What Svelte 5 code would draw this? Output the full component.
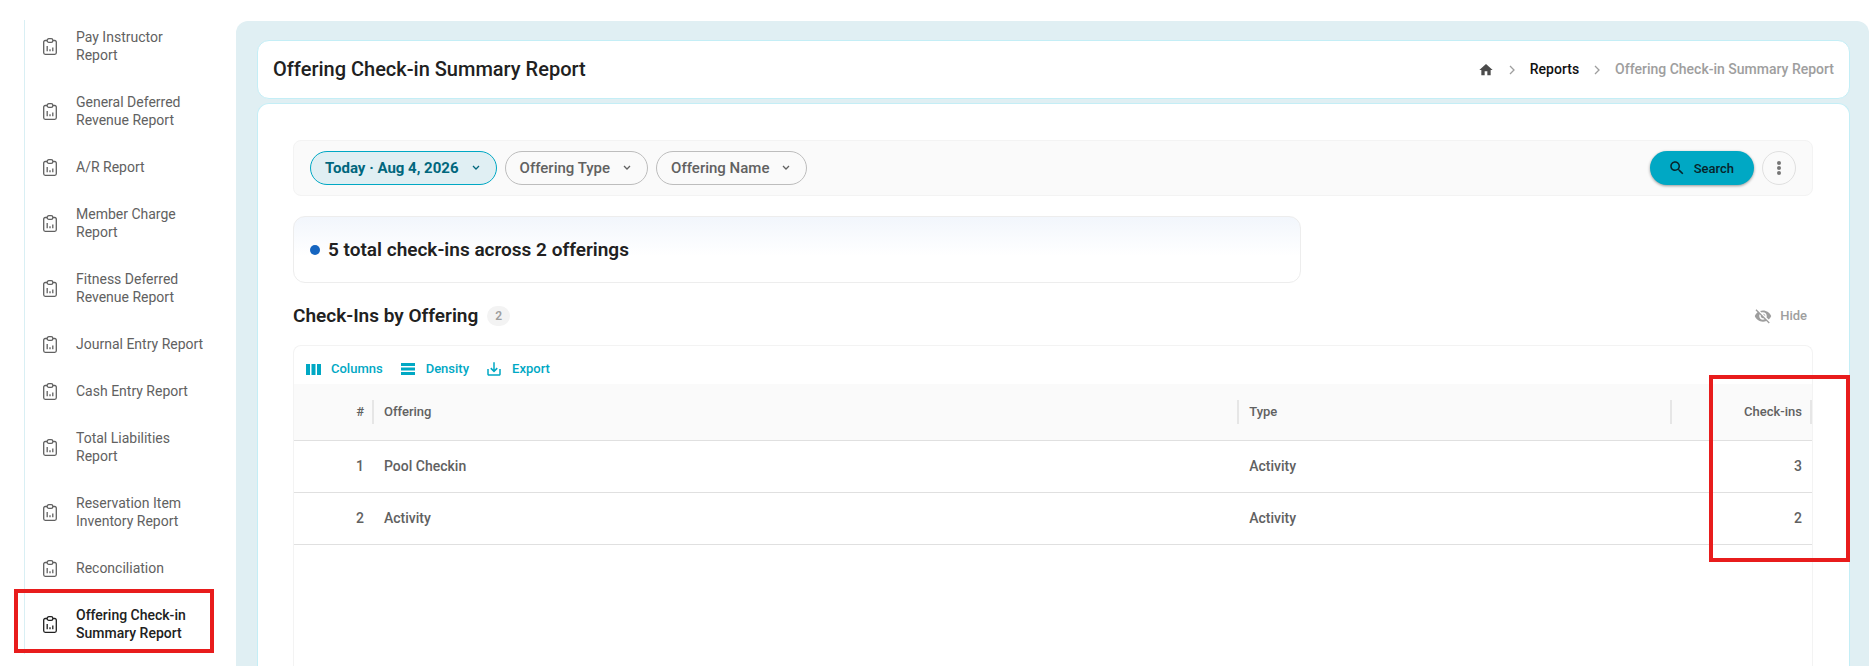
<script lang="ts">
  type Row = { offering: string; type: string; checkIns: number };

  const reports = [
    "Pay Instructor Report",
    "General Deferred Revenue Report",
    "A/R Report",
    "Member Charge Report",
    "Fitness Deferred Revenue Report",
    "Journal Entry Report",
    "Cash Entry Report",
    "Total Liabilities Report",
    "Reservation Item Inventory Report",
    "Reconciliation",
    "Offering Check-in Summary Report",
  ];
  const title = "Offering Check-in Summary Report";

  const rows: Row[] = [
    { offering: "Pool Checkin", type: "Activity", checkIns: 3 },
    { offering: "Activity", type: "Activity", checkIns: 2 },
  ];

  const filters = ["Today · Aug 4, 2026", "Offering Type", "Offering Name"];

  let active = $state(title);
  let hidden = $state(false);

  const total = $derived(rows.reduce((sum, r) => sum + r.checkIns, 0));
</script>

<div class="layout">
  <nav class="sidebar" aria-label="Reports">
    <ul>
      {#each reports as report}
        <li class:active={report === active}>
          <a href="#report" onclick={() => (active = report)}>
            <svg class="clipboard" viewBox="0 0 14 17" width="14" height="17" aria-hidden="true">
              <path d="M4 2.5H2.2A1.5 1.5 0 0 0 .7 4v10.8a1.5 1.5 0 0 0 1.5 1.5h9.6a1.5 1.5 0 0 0 1.5-1.5V4a1.5 1.5 0 0 0-1.5-1.5H10" />
              <rect x="4.2" y=".7" width="5.6" height="3.6" rx="1.6" />
              <path d="M4.2 8v5.2M7 11.2v2M9.8 9.6v3.6" />
            </svg>
            <span>{report}</span>
          </a>
          {#if report === title}<i class="mark mark-nav"></i>{/if}
        </li>
      {/each}
    </ul>
  </nav>

  <main>
    <header class="panel page-header">
      <h1>{title}</h1>
      <nav class="crumbs" aria-label="Breadcrumb">
        <a href="#home" aria-label="Home">
          <svg viewBox="0 0 24 24" width="16" height="16" fill="#4b4b4b"><path d="M10 20v-6h4v6h5v-8h3L12 3 2 12h3v8z" /></svg>
        </a>
        <svg class="sep" viewBox="0 0 6 10" width="6" height="10"><path d="M1 1l4 4-4 4" /></svg>
        <a href="#reports">Reports</a>
        <svg class="sep" viewBox="0 0 6 10" width="6" height="10"><path d="M1 1l4 4-4 4" /></svg>
        <span>{title}</span>
      </nav>
    </header>

    <section class="panel content">
      <div class="filter-bar">
        {#each filters as filter, i}
          <button class="chip" class:selected={i === 0}>
            {filter}
            <svg viewBox="0 0 8 6" width="8" height="6"><path d="M1 1l3 3 3-3" /></svg>
          </button>
        {/each}
        <button class="search">
          <svg viewBox="0 0 24 24" width="18" height="18" fill="currentColor"><path d="M15.5 14h-.79l-.28-.27C15.41 12.59 16 11.11 16 9.5 16 5.91 13.09 3 9.5 3S3 5.91 3 9.5 5.91 16 9.5 16c1.61 0 3.09-.59 4.23-1.57l.27.28v.79l5 4.99L20.49 19zm-6 0C7.01 14 5 11.99 5 9.5S7.01 5 9.5 5 14 7.01 14 9.5 11.99 14 9.5 14" /></svg>
          Search
        </button>
        <button class="more" aria-label="More actions">
          <svg viewBox="0 0 4 14" width="4" height="14" fill="#757575"><circle cx="2" cy="2" r="2" /><circle cx="2" cy="7" r="2" /><circle cx="2" cy="12" r="2" /></svg>
        </button>
      </div>

      <div class="summary-grid">
        <p class="summary">{total} total check-ins across {rows.length} offerings</p>
      </div>

      <div class="section-head">
        <h2>Check-Ins by Offering</h2>
        <span class="badge">{rows.length}</span>
        <button class="hide" onclick={() => (hidden = !hidden)}>
          <svg viewBox="0 0 24 24" width="18" height="18" fill="currentColor"><path d="M12 7c2.76 0 5 2.24 5 5 0 .65-.13 1.26-.36 1.83l2.92 2.92c1.51-1.26 2.7-2.89 3.43-4.75-1.73-4.39-6-7.5-11-7.5-1.4 0-2.74.25-3.98.7l2.16 2.16C10.74 7.13 11.35 7 12 7M2 4.27l2.28 2.28.46.46C3.08 8.3 1.78 10.02 1 12c1.73 4.39 6 7.5 11 7.5 1.55 0 3.03-.3 4.38-.84l.42.42L19.73 22 21 20.73 3.27 3zM7.53 9.8l1.55 1.55c-.05.21-.08.43-.08.65 0 1.66 1.34 3 3 3 .22 0 .44-.03.65-.08l1.55 1.55c-.67.33-1.41.53-2.2.53-2.76 0-5-2.24-5-5 0-.79.2-1.53.53-2.2m4.31-.78 3.15 3.15.02-.16c0-1.66-1.34-3-3-3z" /></svg>
          {hidden ? "Show" : "Hide"}
        </button>
      </div>

      {#if !hidden}
        <div class="grid">
          <div class="toolbar">
            <button>
              <svg viewBox="0 0 18 18" width="18" height="18" fill="currentColor"><path d="M2 4h4v11H2zM7.500 4h4v11h-4zM13 4h4v11h-4z" /></svg>
              Columns
            </button>
            <button>
              <svg viewBox="0 0 18 18" width="18" height="18" fill="currentColor"><path d="M2 3h14v3H2zM2 7.500h14v3H2zM2 12h14v3H2z" /></svg>
              Density
            </button>
            <button>
              <svg viewBox="0 0 24 24" width="18" height="18" fill="currentColor"><path d="M19 12v7H5v-7H3v7c0 1.1.9 2 2 2h14c1.1 0 2-.9 2-2v-7zm-6 .67 2.59-2.58L17 11.5l-5 5-5-5 1.41-1.41L11 12.67V3h2z" /></svg>
              Export
            </button>
          </div>
          <table>
            <thead>
              <tr>
                <th class="index num">#</th>
                <th class="offering">Offering</th>
                <th>Type</th>
                <th class="count num">Check-ins</th>
              </tr>
            </thead>
            <tbody>
              {#each rows as row, i}
                <tr>
                  <td class="num">{i + 1}</td>
                  <td>{row.offering}</td>
                  <td>{row.type}</td>
                  <td class="num">{row.checkIns}</td>
                </tr>
              {/each}
            </tbody>
          </table>
          <i class="mark mark-count"></i>
        </div>
      {/if}
    </section>
  </main>
</div>

<style>
  :global(body) {
    background: #fff;
    font-family: Roboto, "Liberation Sans", sans-serif;
    font-size: 14px;
    font-weight: 500;
    color: #212121;
  }

  h1,
  h2,
  p,
  ul {
    margin: 0;
    padding: 0;
  }

  a {
    color: inherit;
    text-decoration: none;
  }

  button {
    display: flex;
    align-items: center;
    padding: 0;
    border: none;
    background: none;
    font: inherit;
    color: inherit;
    cursor: pointer;
  }

  .layout {
    display: flex;
    height: 100vh;
    overflow: hidden;
  }

  /* SIDEBAR */
  .sidebar {
    flex: none;
    box-sizing: border-box;
    width: 236px;
    padding: 20px 24px 0;
  }

  .sidebar ul {
    display: flex;
    flex-direction: column;
    gap: 12px;
    padding-bottom: 3px;
    border-left: 1px solid #d9eff4;
    list-style: none;
  }

  .sidebar li {
    position: relative;
    color: #616161;
    font-weight: 400;
  }

  .sidebar li.active {
    color: #212121;
    font-weight: 500;
  }

  .sidebar a {
    display: flex;
    align-items: center;
    gap: 19px;
    padding: 8px 7px 9px 18px;
    line-height: 18px;
  }

  .clipboard {
    flex: none;
    fill: none;
    stroke: currentColor;
    stroke-width: 1.3;
  }

  /* PANELS */
  main {
    flex: 1;
    display: flex;
    flex-direction: column;
    gap: 4px;
    min-width: 0;
    margin-top: 21px;
    padding: 19px 19px 0 21px;
    border-radius: 12px 12px 0 0;
    background: #e0eff3;
  }

  .panel {
    border: 1px solid #c4eef6;
    border-radius: 12px;
    background: #fff;
  }

  .page-header {
    display: flex;
    align-items: center;
    justify-content: space-between;
    padding: 16px 15px;
    line-height: 25px;
  }

  h1 {
    font-size: 20px;
    font-weight: 500;
  }

  .crumbs {
    display: flex;
    align-items: center;
    gap: 15px;
    color: #9e9e9e;
  }

  .crumbs a {
    display: flex;
    color: #111;
  }

  .sep,
  .chip svg {
    fill: none;
    stroke: currentColor;
    stroke-width: 1.3;
  }

  .content {
    flex: 1;
    display: flex;
    flex-direction: column;
    padding: 36px 36px 0 35px;
    border-bottom: none;
    border-radius: 12px 12px 0 0;
  }

  /* FILTERS */
  .filter-bar {
    display: flex;
    align-items: center;
    gap: 8px;
    padding: 10px 16px;
    border: 1px solid #f3f3f3;
    border-radius: 8px;
    background: #fafafa;
  }

  .chip {
    gap: 13px;
    height: 34px;
    padding: 0 16px 0 14px;
    border: 1px solid #bdbdbd;
    border-radius: 17px;
    font-size: 15px;
    color: #616161;
  }

  .chip.selected {
    border-color: #00a8c4;
    background: #e0eff3;
    color: #00677d;
    font-weight: 700;
  }

  .search {
    gap: 8px;
    height: 34px;
    margin-left: auto;
    padding: 0 20px 0 18px;
    border-radius: 17px;
    background: #00a8c4;
    box-shadow: 0 1px 3px rgba(0, 0, 0, 0.4);
    font-size: 13px;
    color: #08242a;
  }

  .more {
    justify-content: center;
    width: 34px;
    height: 34px;
    border: 1px solid #e0e0e0;
    border-radius: 50%;
  }

  /* SUMMARY */
  .summary-grid {
    display: grid;
    grid-template-columns: repeat(3, 1fr);
    gap: 16px;
    margin-top: 20px;
  }

  .summary {
    grid-column: span 2;
    display: flex;
    align-items: center;
    gap: 8px;
    padding: 20px 16px;
    border: 1px solid #ededed;
    border-radius: 12px;
    background: linear-gradient(#f2f6fc, #fff 60%);
    font-size: 19px;
    font-weight: 600;
    line-height: 25px;
  }

  .summary::before {
    content: "";
    width: 10px;
    height: 10px;
    border-radius: 50%;
    background: #1565c0;
  }

  .section-head {
    display: flex;
    align-items: center;
    margin: 20px 0 17px;
    line-height: 25px;
  }

  h2 {
    font-size: 19px;
    font-weight: 600;
  }

  .badge {
    margin-left: 9px;
    padding: 0 8px;
    border-radius: 10px;
    background: #f3f3f3;
    font-size: 12px;
    font-weight: 600;
    line-height: 20px;
    color: #9e9e9e;
  }

  .hide {
    gap: 8px;
    margin-left: auto;
    padding-right: 6px;
    font-size: 13px;
    color: #9e9e9e;
  }

  /* DATA GRID */
  .grid {
    flex: 1;
    position: relative;
    border: 1px solid #f3f3f3;
    border-bottom: none;
    border-radius: 8px 8px 0 0;
  }

  .toolbar {
    display: flex;
    gap: 16px;
    padding: 10px 10px 2px;
    color: #00a8c4;
    font-size: 13px;
    line-height: 26px;
  }

  .toolbar button {
    gap: 9px;
  }

  table {
    width: 100%;
    table-layout: fixed;
    border-collapse: collapse;
    color: #616161;
  }

  th,
  td {
    box-sizing: border-box;
    height: 52px;
    padding: 0 10px;
    border-bottom: 1px solid #e0e0e0;
    font-weight: 500;
    text-align: left;
  }

  th {
    height: 56px;
    background: linear-gradient(#e6e6e6, #e6e6e6) right center / 2px 24px no-repeat #fafafa;
    font-size: 13px;
  }

  .index {
    width: 80px;
  }

  .offering {
    width: 57%;
  }

  .count {
    width: 140px;
  }

  .num {
    text-align: right;
  }

  /* HIGHLIGHT FRAMES */
  .mark {
    position: absolute;
    box-sizing: border-box;
    border: 4px solid #e81c1c;
    pointer-events: none;
  }

  .mark-nav {
    inset: -9px -2px -2px -11px;
  }

  .mark-count {
    top: 29px;
    right: -38px;
    width: 141px;
    height: 187px;
  }
</style>
